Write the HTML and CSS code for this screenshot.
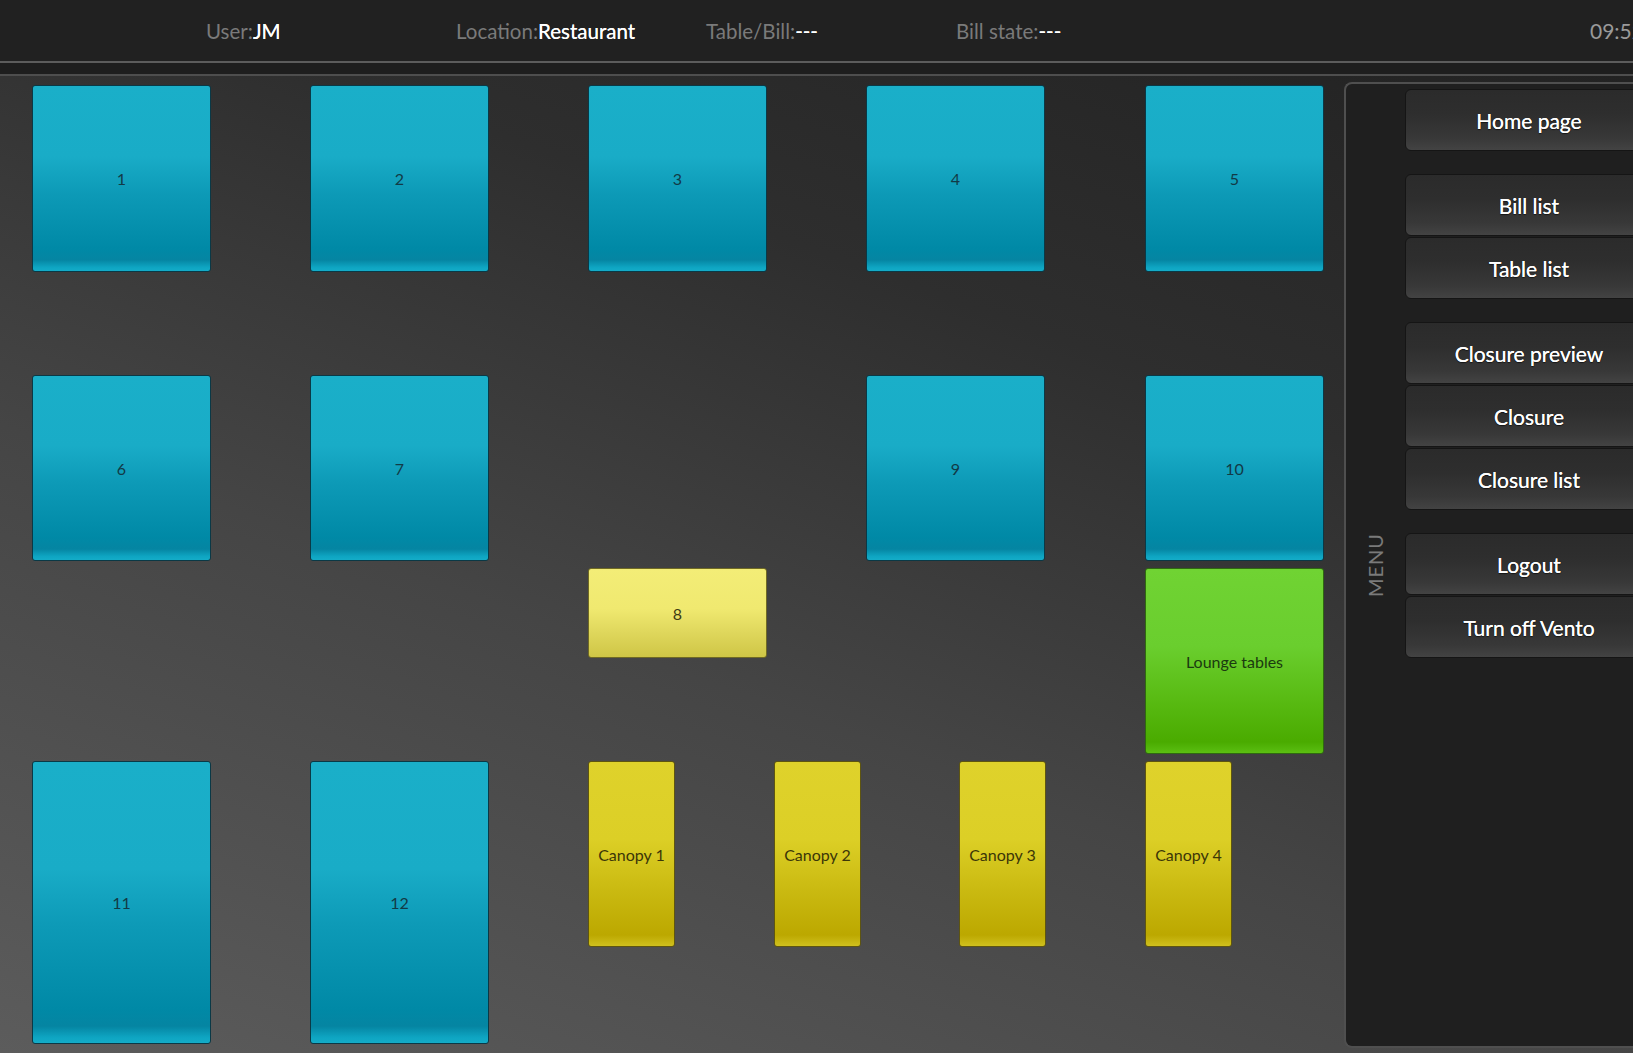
FILE: index.html
```html
<!DOCTYPE html>
<html lang="en">
<head>
<meta charset="utf-8">
<title>Vento - Restaurant</title>
<link rel="stylesheet" href="styles.css">
</head>
<body>
<div class="app">
  <header class="topbar">
    <div class="info"><span class="lbl">User:</span><span class="val">JM</span></div>
    <div class="info"><span class="lbl">Location:</span><span class="val">Restaurant</span></div>
    <div class="info"><span class="lbl">Table/Bill:</span><span class="val">---</span></div>
    <div class="info"><span class="lbl">Bill state:</span><span class="val">---</span></div>
    <div class="clock">09:52</div>
  </header>
  <div class="band"></div>
  <main class="main">
    <section class="floor">
      <div class="tbl blue" style="left:32px;top:9px;width:179px;height:187px">1</div>
      <div class="tbl blue" style="left:310px;top:9px;width:179px;height:187px">2</div>
      <div class="tbl blue" style="left:588px;top:9px;width:179px;height:187px">3</div>
      <div class="tbl blue" style="left:866px;top:9px;width:179px;height:187px">4</div>
      <div class="tbl blue" style="left:1145px;top:9px;width:179px;height:187px">5</div>
      <div class="tbl blue" style="left:32px;top:299px;width:179px;height:186px">6</div>
      <div class="tbl blue" style="left:310px;top:299px;width:179px;height:186px">7</div>
      <div class="tbl blue" style="left:866px;top:299px;width:179px;height:186px">9</div>
      <div class="tbl blue" style="left:1145px;top:299px;width:179px;height:186px">10</div>
      <div class="tbl pale" style="left:588px;top:492px;width:179px;height:90px">8</div>
      <div class="tbl green" style="left:1145px;top:492px;width:179px;height:186px">Lounge tables</div>
      <div class="tbl blue" style="left:32px;top:685px;width:179px;height:283px">11</div>
      <div class="tbl blue" style="left:310px;top:685px;width:179px;height:283px">12</div>
      <div class="tbl gold" style="left:588px;top:685px;width:87px;height:186px">Canopy 1</div>
      <div class="tbl gold" style="left:774px;top:685px;width:87px;height:186px">Canopy 2</div>
      <div class="tbl gold" style="left:959px;top:685px;width:87px;height:186px">Canopy 3</div>
      <div class="tbl gold" style="left:1145px;top:685px;width:87px;height:186px">Canopy 4</div>
    </section>
    <aside class="menu">
      <div class="menu-label"><span>MENU</span></div>
      <nav class="menu-buttons">
        <div class="group">
          <button class="btn">Home page</button>
        </div>
        <div class="group">
          <button class="btn">Bill list</button>
          <button class="btn">Table list</button>
        </div>
        <div class="group">
          <button class="btn">Closure preview</button>
          <button class="btn">Closure</button>
          <button class="btn">Closure list</button>
        </div>
        <div class="group">
          <button class="btn">Logout</button>
          <button class="btn">Turn off Vento</button>
        </div>
      </nav>
    </aside>
  </main>
</div>
</body>
</html>
```

FILE: styles.css
```css
html, body {
  margin: 0;
  padding: 0;
  background: #202020;
}
body {
  width: 1633px;
  height: 1053px;
  overflow: hidden;
  font-family: Lato, "Open Sans", "Liberation Sans", sans-serif;
}
.app {
  display: flex;
  flex-direction: column;
  height: 1053px;
  width: 1633px;
}
.topbar {
  height: 61px;
  flex: none;
  display: flex;
  align-items: center;
  padding-left: 206px;
  background: #212121;
  border-bottom: 2px solid #5c5c5c;
  box-sizing: content-box;
  font-size: 20.5px;
  white-space: nowrap;
}
.info {
  width: 250px;
  flex: none;
}
.lbl {
  color: #7a7a7a;
}
.val {
  color: #ffffff;
  text-shadow: 0 0 0.4px #ffffff;
}
.clock {
  margin-left: 384px;
  color: #9a9a9a;
  font-size: 21px;
  flex: none;
}
.band {
  height: 11px;
  flex: none;
  background: #1e1e1e;
  border-bottom: 2px solid #4e4e4e;
}
.main {
  flex: 1;
  display: flex;
  position: relative;
  background: linear-gradient(200deg, #222222 0%, #2e2e2e 30%, #454545 60%, #5c5c5c 100%);
  min-height: 0;
}
.floor {
  position: relative;
  width: 1344px;
  flex: none;
}
.tbl {
  position: absolute;
  box-sizing: border-box;
  display: flex;
  align-items: center;
  justify-content: center;
  text-align: center;
  border-radius: 3px;
  font-size: 16px;
  border: 1px solid #0c3b48;
}
.blue {
  background: linear-gradient(to bottom, #1aafc9 0%, #19acc7 38%, #0d9ab7 58%, #0089a6 88%, #0585a2 94%, #0ea5c2 98%, #14acc8 100%);
  color: #123a46;
  border-color: #0a3946;
}
.pale {
  background: linear-gradient(to bottom, #f3ed77 0%, #f0e970 45%, #dfd75c 72%, #cfc646 100%);
  color: #3e3a14;
  border-color: #706a24;
}
.gold {
  background: linear-gradient(to bottom, #dfd22b 0%, #dccf26 42%, #cbbb12 68%, #bca800 94%, #c9b814 98%, #d0c01e 100%);
  color: #3c3608;
  border-color: #5e5510;
}
.green {
  background: linear-gradient(to bottom, #70d333 0%, #6ace2e 42%, #58ba12 72%, #4aab00 94%, #55b80c 98%, #5cc012 100%);
  color: #1b3a10;
  border-color: #2f6a10;
}
.menu {
  flex: none;
  width: 320px;
  margin-top: 6px;
  margin-bottom: 5px;
  display: flex;
  background: #1f1f1f;
  border: 2px solid #4f4f4f;
  border-right: none;
  border-radius: 8px 0 0 8px;
  box-sizing: border-box;
}
.menu-label {
  width: 59px;
  flex: none;
  display: flex;
  align-items: center;
  justify-content: center;
}
.menu-label span {
  display: block;
  transform: rotate(-90deg);
  color: #7a7a7a;
  font-size: 20px;
  letter-spacing: 1px;
}
.menu-buttons {
  display: flex;
  flex-direction: column;
  gap: 23px;
  padding-top: 5px;
}
.group {
  display: flex;
  flex-direction: column;
  gap: 1px;
}
.btn {
  width: 248px;
  height: 62px;
  box-sizing: border-box;
  border: 1px solid #151515;
  border-radius: 6px;
  background: linear-gradient(to bottom, #2b2b2b 0%, #2e2e2e 40%, #383838 80%, #434343 100%);
  color: #ffffff;
  font-family: Lato, "Open Sans", "Liberation Sans", sans-serif;
  font-size: 21px;
  text-shadow: 0 0 0.5px #ffffff, 0 1px 1px rgba(0, 0, 0, 0.6);
  padding: 0;
  cursor: pointer;
}
```
